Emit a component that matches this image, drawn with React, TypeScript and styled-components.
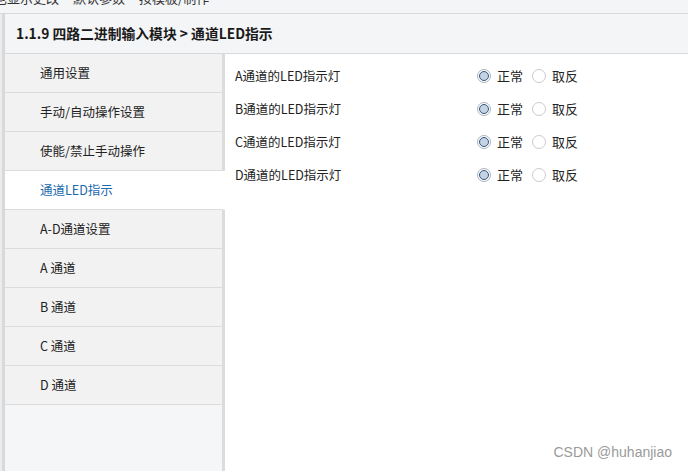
import React, { useState } from 'react';
import styled, { createGlobalStyle } from 'styled-components';

const GlobalStyle = createGlobalStyle`
  html, body {
    margin: 0;
    padding: 0;
  }
  body {
    font-family: "Noto Sans CJK SC", "Noto Sans", sans-serif;
    font-size: 12.5px;
    color: #222;
  }
  * {
    box-sizing: border-box;
  }
`;

const Page = styled.div`
  position: relative;
  display: flex;
  flex-direction: column;
  width: 688px;
  height: 471px;
  overflow: hidden;
  background: #f4f5f7;
`;

const TopStrip = styled.div`
  height: 14px;
  flex-shrink: 0;
  overflow: hidden;
  border-bottom: 1px solid #d8d9db;
  display: flex;
  gap: 14px;
  margin-left: -6px;
`;

const TopLink = styled.span`
  margin-top: -12px;
  line-height: 20px;
  font-size: 13px;
  white-space: nowrap;
  color: #333;
`;

const Body = styled.div`
  display: flex;
  flex: 1;
  min-height: 0;
`;

const LeftEdge = styled.div`
  width: 2px;
  background: #ececed;
  flex-shrink: 0;
`;

const Main = styled.div`
  display: flex;
  flex-direction: column;
  flex: 1;
  border-left: 3px solid #d8d9dc;
`;

const TitleBar = styled.div`
  height: 40px;
  flex-shrink: 0;
  display: flex;
  align-items: center;
  padding-left: 11px;
  padding-bottom: 1px;
  border-bottom: 1px solid #d8d9db;
  font-weight: bold;
  font-size: 13.8px;
  color: #1a1a1a;
`;

const Panels = styled.div`
  display: flex;
  flex: 1;
  min-height: 0;
`;

const Sidebar = styled.div`
  width: 220px;
  display: flex;
  flex-direction: column;
  flex-shrink: 0;
`;

const NavItem = styled.div<{ $active?: boolean }>`
  height: 39px;
  display: flex;
  align-items: center;
  padding-left: 35px;
  padding-bottom: 2px;
  background: ${({ $active }) => ($active ? '#ffffff' : '#f2f2f2')};
  color: ${({ $active }) => ($active ? '#1b69ad' : '#222')};
  border-bottom: 1px solid #dcdcdc;
  border-right: 3px solid ${({ $active }) => ($active ? '#ffffff' : '#dcdcdc')};
  cursor: pointer;
`;

const SidebarFill = styled.div`
  flex: 1;
  background: #f5f6f8;
  border-right: 3px solid #dcdcdc;
`;

const Content = styled.div`
  flex: 1;
  background: #ffffff;
  padding: 5px 0 0 10px;
`;

const SettingRow = styled.div`
  display: grid;
  grid-template-columns: 242px auto;
  align-items: center;
  height: 33px;
`;

const RadioGroup = styled.div`
  display: flex;
  align-items: center;
`;

const RadioLabel = styled.label`
  display: flex;
  align-items: center;
  gap: 6px;
  margin-right: 9px;
  font-size: 13px;
  cursor: pointer;
`;

const RadioCircle = styled.span<{ $checked: boolean }>`
  width: 14px;
  height: 14px;
  border-radius: 50%;
  border: 1px solid ${({ $checked }) => ($checked ? '#a9b3bf' : '#cbcbcb')};
  background: #fff;
  display: flex;
  align-items: center;
  justify-content: center;

  &::after {
    content: '';
    display: ${({ $checked }) => ($checked ? 'block' : 'none')};
    width: 8px;
    height: 8px;
    border-radius: 50%;
    border: 1px solid #36557a;
    background: #c3d2e4;
  }
`;

const Watermark = styled.div`
  position: absolute;
  right: 16px;
  bottom: 11px;
  font-family: "Liberation Sans", Arial, sans-serif;
  font-size: 14px;
  color: #9a9a9a;
`;

const navItems = [
  '通用设置',
  '手动/自动操作设置',
  '使能/禁止手动操作',
  '通道LED指示',
  'A-D通道设置',
  'A 通道',
  'B 通道',
  'C 通道',
  'D 通道',
];

const channels = ['A', 'B', 'C', 'D'];

export default function App() {
  const [active, setActive] = useState('通道LED指示');
  const [modes, setModes] = useState<Record<string, string>>({
    A: 'normal',
    B: 'normal',
    C: 'normal',
    D: 'normal',
  });

  return (
    <>
      <GlobalStyle />
      <Page>
        <TopStrip>
          <TopLink>也显示更改</TopLink>
          <TopLink>默认参数</TopLink>
          <TopLink>按模板/制作</TopLink>
        </TopStrip>
        <Body>
          <LeftEdge />
          <Main>
            <TitleBar>1.1.9 四路二进制输入模块 &gt; 通道LED指示</TitleBar>
            <Panels>
              <Sidebar>
                {navItems.map((item) => (
                  <NavItem key={item} $active={item === active} onClick={() => setActive(item)}>
                    {item}
                  </NavItem>
                ))}
                <SidebarFill />
              </Sidebar>
              <Content>
                {channels.map((ch) => (
                  <SettingRow key={ch}>
                    <span>{ch}通道的LED指示灯</span>
                    <RadioGroup>
                      {[
                        { value: 'normal', label: '正常' },
                        { value: 'invert', label: '取反' },
                      ].map((opt) => (
                        <RadioLabel
                          key={opt.value}
                          onClick={() => setModes({ ...modes, [ch]: opt.value })}
                        >
                          <RadioCircle $checked={modes[ch] === opt.value} />
                          {opt.label}
                        </RadioLabel>
                      ))}
                    </RadioGroup>
                  </SettingRow>
                ))}
              </Content>
            </Panels>
          </Main>
        </Body>
        <Watermark>CSDN @huhanjiao</Watermark>
      </Page>
    </>
  );
}
